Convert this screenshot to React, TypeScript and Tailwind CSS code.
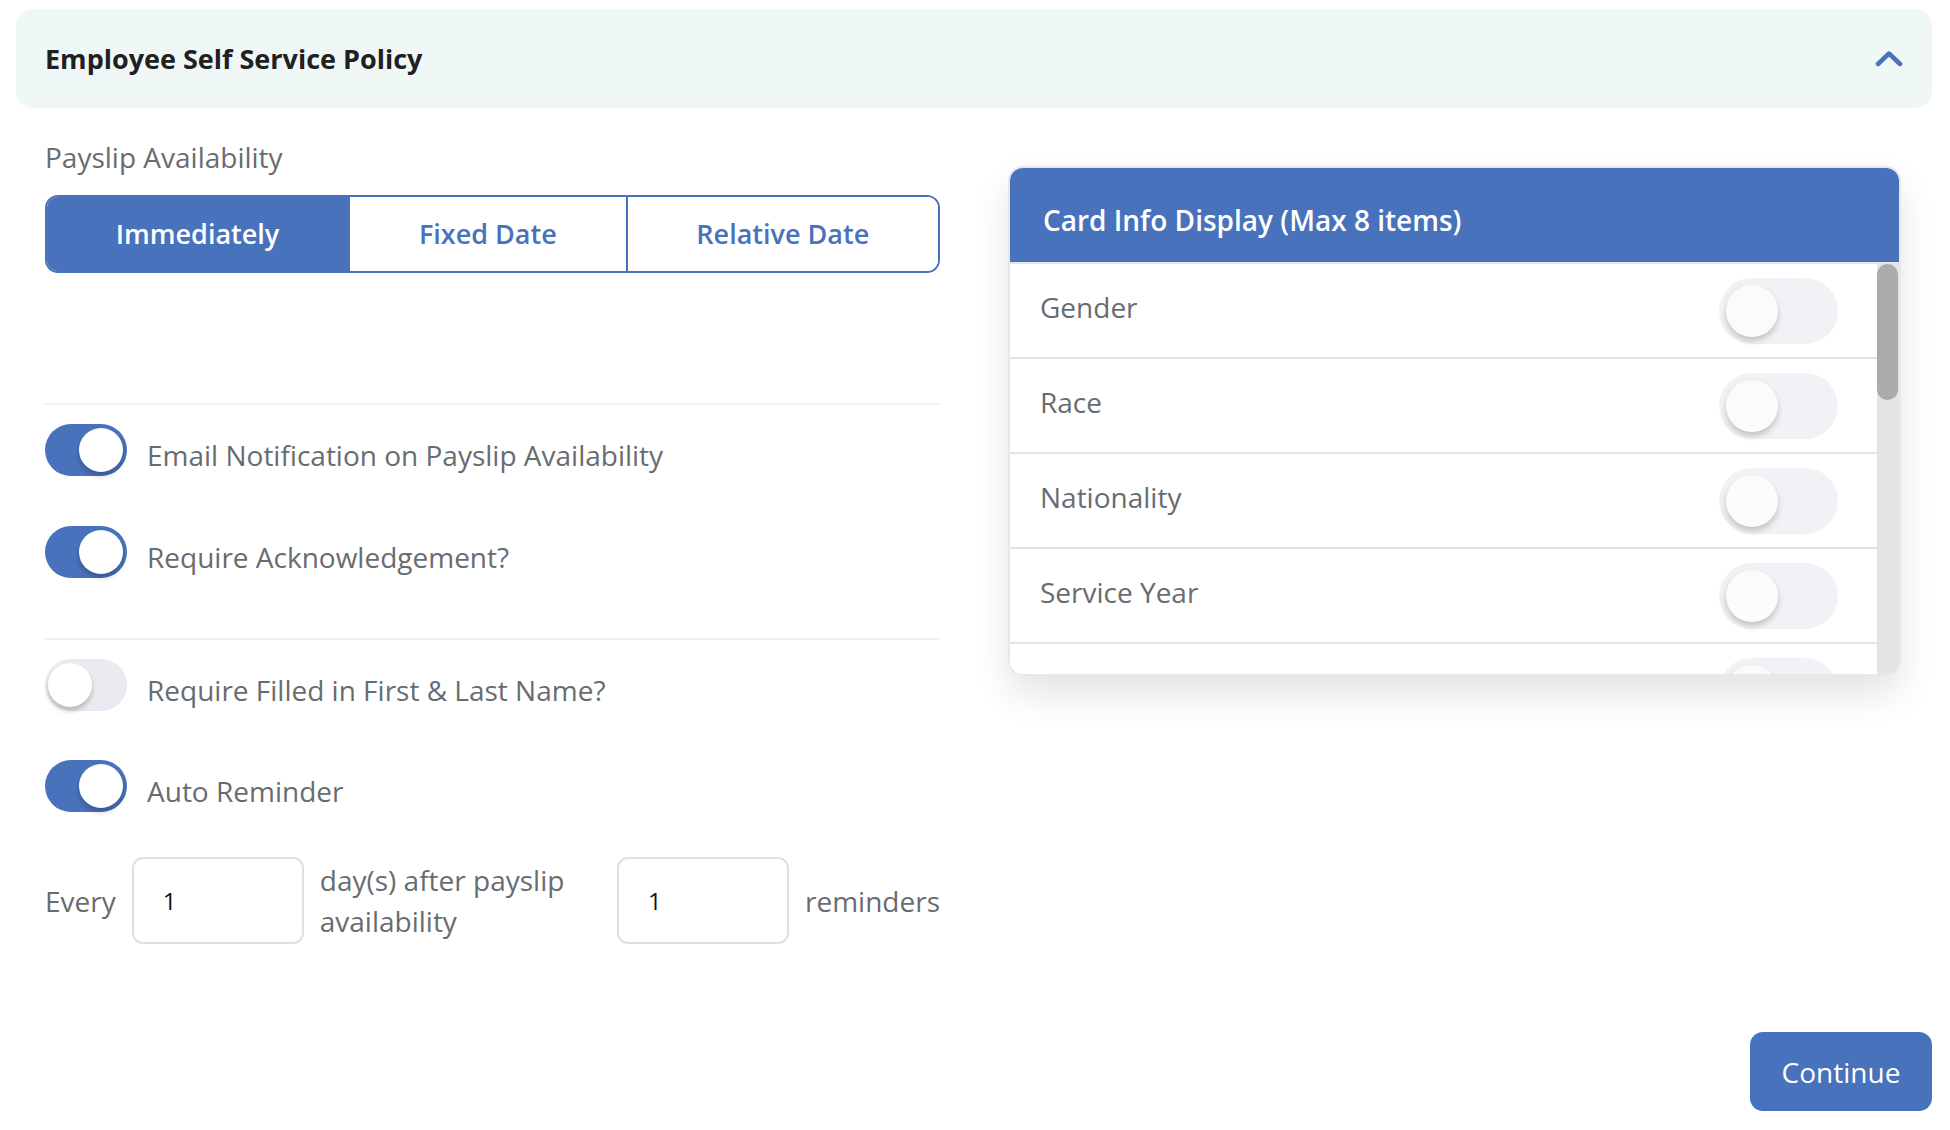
import React from 'react';

// Blue used across the policy form
const BLUE = 'bg-[#4872bb]';

type SwitchProps = { on: boolean };

// Small pill switch used in the left column
const Switch: React.FC<SwitchProps> = ({ on }) => (
  <div
    className={`flex h-[52px] w-[82px] shrink-0 items-center rounded-full ${
      on ? 'justify-end bg-[#4872bb] pr-[4px]' : 'justify-start bg-[#eaebf0] pl-[3px]'
    }`}
  >
    <div className="h-[44px] w-[44px] rounded-full bg-white shadow-[0_4px_5px_rgba(0,0,0,0.22)]" />
  </div>
);

// Larger switch inside the card rows
const CardSwitch: React.FC = () => (
  <div className="flex h-[66px] w-[119px] shrink-0 items-center rounded-full bg-[#f1f2f5] pl-[7px]">
    <div className="h-[52px] w-[52px] rounded-full bg-[#fbfbfb] shadow-[0_4px_6px_rgba(0,0,0,0.2)]" />
  </div>
);

const SwitchRow: React.FC<{ on: boolean; label: string; className?: string }> = ({ on, label, className }) => (
  <div className={`flex items-center gap-[20px] ${className ?? ''}`}>
    <Switch on={on} />
    <span className="pt-[10px] text-[28px] font-medium leading-[38px] text-[#686c71]">{label}</span>
  </div>
);

const segments = ['Immediately', 'Fixed Date', 'Relative Date'];

const cardItems = ['Gender', 'Race', 'Nationality', 'Service Year', 'Employment Type'];

export default function App() {
  const active = 0;

  return (
    <div className="min-h-[1130px] w-[1950px] bg-white pl-4 pr-[18px] pt-[9px] font-['Open_Sans',sans-serif]">
      {/* Section header */}
      <div className="flex h-[99px] items-center justify-between rounded-[16px] bg-[#eff8f6] pl-[29px] pr-[29px]">
        <h2 className="text-[27px] font-bold leading-[38px] text-[#1f2022]">Employee Self Service Policy</h2>
        <svg width="28" height="18" viewBox="0 0 28 18" fill="none">
          <polyline
            points="3,14 14,3.5 25,14"
            stroke="#4872bb"
            strokeWidth="4.5"
            strokeLinecap="round"
            strokeLinejoin="round"
          />
        </svg>
      </div>

      <div className="flex justify-between pl-[29px] pr-[31px]">
        {/* Left: payslip options */}
        <div className="w-[895px]">
          <div className="mt-[30px] text-[28px] font-medium leading-[38px] text-[#686c71]">Payslip Availability</div>

          <div className="mt-[19px] flex h-[78px] overflow-hidden rounded-[13px] border-2 border-[#4872bb]">
            {segments.map((s, i) => (
              <div
                key={s}
                className={`flex flex-auto items-center justify-center text-[27px] font-semibold ${
                  i > 0 ? 'border-l-2 border-[#4872bb]' : ''
                } ${i === active ? `${BLUE} text-white` : 'bg-white text-[#4872bb]'}`}
              >
                {s}
              </div>
            ))}
          </div>

          <div className="mt-[130px] h-[2px] bg-[#f0f1f3]" />

          <SwitchRow on label="Email Notification on Payslip Availability" className="mt-[19px]" />
          <SwitchRow on label="Require Acknowledgement?" className="mt-[50px]" />

          <div className="mt-[60px] h-[2px] bg-[#f0f1f3]" />

          <SwitchRow on={false} label="Require Filled in First & Last Name?" className="mt-[19px]" />
          <SwitchRow on label="Auto Reminder" className="mt-[49px]" />

          {/* Reminder schedule */}
          <div className="mt-[45px] flex items-center gap-4 text-[28px] font-medium leading-[38px] text-[#686c71]">
            <span>Every</span>
            <div className="flex h-[87px] w-[172px] shrink-0 items-center rounded-[11px] border-2 border-[#dbe2e5] pl-[29px] text-[24px] font-normal text-[#111]">
              1
            </div>
            <span className="flex-1 leading-[41px]">day(s) after payslip availability</span>
            <div className="flex h-[87px] w-[172px] shrink-0 items-center rounded-[11px] border-2 border-[#dbe2e5] pl-[29px] text-[24px] font-normal text-[#111]">
              1
            </div>
            <span>reminders</span>
          </div>
        </div>

        {/* Right: card info display */}
        <div className="mt-[58px] flex h-[510px] w-[893px] flex-col overflow-hidden rounded-[15px] border-2 border-[#e6e8eb] shadow-[0_18px_36px_rgba(0,0,0,0.11)]">
          <div className={`flex h-[96px] shrink-0 items-center border-b-2 border-[#e3e5e9] pl-[33px] ${BLUE}`}>
            <span className="pt-[10px] text-[28px] font-semibold text-white">Card Info Display (Max 8 items)</span>
          </div>
          <div className="flex min-h-0 flex-1">
            <div className="flex-1 overflow-hidden bg-white">
              {cardItems.map((item) => (
                <div
                  key={item}
                  className="flex h-[95px] items-center justify-between border-b-2 border-[#e1e3e7] pl-[30px] pr-[39px]"
                >
                  <span className="mb-[8px] text-[28px] font-medium text-[#686c71]">{item}</span>
                  <CardSwitch />
                </div>
              ))}
            </div>
            <div className="w-[22px] shrink-0 bg-[#e4e4e4]">
              <div className="h-[136px] w-[21px] rounded-full bg-[#ababab]" />
            </div>
          </div>
        </div>
      </div>

      <div className="mt-[88px] flex justify-end">
        <button className={`h-[79px] w-[182px] rounded-[13px] text-[28px] font-medium text-white ${BLUE}`}>
          Continue
        </button>
      </div>
    </div>
  );
}
